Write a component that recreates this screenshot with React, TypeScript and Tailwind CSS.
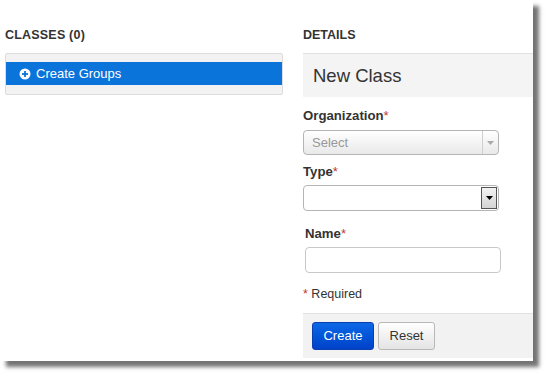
import React from "react";

export default function App() {
  return (
    <div
      className="w-[548px] h-[378px] bg-white relative overflow-hidden"
      style={{ fontFamily: '"Liberation Sans", Arial, sans-serif' }}
    >
      <div className="w-[533px] h-[361px] bg-white shadow-[6px_6px_4px_rgba(0,0,0,0.55)] flex pl-[5px] pt-[28px] text-[#333]">
        {/* Left column */}
        <div className="w-[278px] flex flex-col">
          <div className="h-[15px] text-[12.5px] font-bold leading-[15px] tracking-[0.2px] text-[#333]">
            CLASSES (0)
          </div>
          <div className="mt-[10px] h-[42px] bg-[#f2f2f2] border border-[#dcdcdc] rounded-[2px] pt-[8px]">
            <div className="h-[23px] bg-[#0a74da] flex items-center pl-[13px] text-white text-[13px]">
              <svg width="12" height="12" viewBox="0 0 12 12" className="mr-[5px]">
                <circle cx="6" cy="6" r="5.5" fill="#fff" />
                <rect x="3" y="5.1" width="6" height="1.8" fill="#0a74da" />
                <rect x="5.1" y="3" width="1.8" height="6" fill="#0a74da" />
              </svg>
              <span>Create Groups</span>
            </div>
          </div>
        </div>

        {/* Right column */}
        <div className="ml-[20px] flex-1 flex flex-col">
          <div className="h-[15px] text-[12.5px] font-bold leading-[15px] text-[#333]">
            DETAILS
          </div>
          <div className="mt-[10px] h-[44px] bg-[#f4f4f4] border-t border-[#e2e2e2] flex items-center pl-[10px] text-[18.5px] text-[#333]">
            New Class
          </div>

          <div className="mt-[11px] h-[16px] text-[13.2px] font-bold leading-[16px] text-[#333]">
            Organization<span className="text-[#c0392b] font-normal">*</span>
          </div>
          <div className="mt-[6px] w-[196px] h-[25px] rounded-[4px] border border-[#b5b5b5] bg-gradient-to-b from-white to-[#e9e9e9] flex items-center">
            <span className="flex-1 pl-[8px] text-[13px] text-[#999]">Select</span>
            <div className="w-[16px] h-full border-l border-[#cfcfcf] flex items-center justify-center">
              <svg width="7" height="4" viewBox="0 0 7 4">
                <path d="M0 0 L7 0 L3.5 4 Z" fill="#aaa" />
              </svg>
            </div>
          </div>

          <div className="mt-[9px] h-[16px] text-[13.2px] font-bold leading-[16px] text-[#333]">
            Type<span className="text-[#c0392b] font-normal">*</span>
          </div>
          <div className="mt-[5px] w-[196px] h-[26px] rounded-[4px] border border-[#b5b5b5] bg-white flex items-center justify-end pr-[1px]">
            <div className="w-[16px] h-[22px] border border-[#555] bg-gradient-to-b from-[#f2f2f2] to-[#d4d4d4] flex items-center justify-center">
              <svg width="7" height="4" viewBox="0 0 7 4">
                <path d="M0 0 L7 0 L3.5 4 Z" fill="#000" />
              </svg>
            </div>
          </div>

          <div className="mt-[15px] ml-[2px] h-[16px] text-[13.2px] font-bold leading-[16px] text-[#333]">
            Name<span className="text-[#c0392b] font-normal">*</span>
          </div>
          <div className="mt-[5px] ml-[2px] w-[196px] h-[26px] rounded-[4px] border border-[#c8c8c8] bg-white" />

          <div className="mt-[14px] h-[15px] text-[12.5px] leading-[15px] text-[#333]">
            <span className="text-[#c0392b]">*</span> Required
          </div>

          <div className="mt-[11px] h-[45px] bg-[#f2f2f2] border-t border-[#e2e2e2] flex items-center pl-[9px] gap-[4px]">
            <button className="w-[62px] h-[28px] rounded-[3px] border border-[#0a3fb0] bg-gradient-to-b from-[#0d68e6] to-[#0042c9] text-white text-[13px]">
              Create
            </button>
            <button className="w-[57px] h-[28px] rounded-[3px] border border-[#b8b8b8] bg-gradient-to-b from-white to-[#e4e4e4] text-[#333] text-[13px]">
              Reset
            </button>
          </div>
        </div>
      </div>
    </div>
  );
}
